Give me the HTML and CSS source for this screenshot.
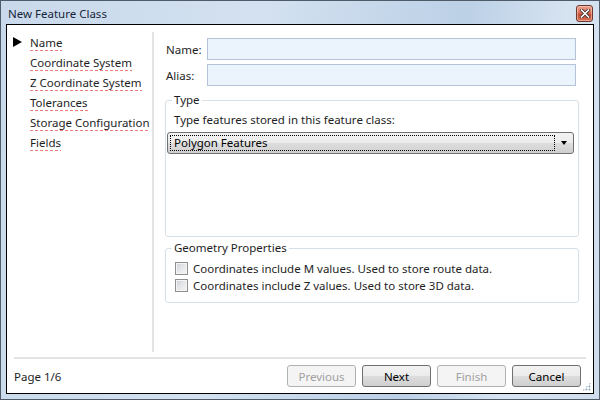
FILE: index.html
```html
<!DOCTYPE html>
<html>
<head>
<meta charset="utf-8">
<link rel="stylesheet" href="styles.css">
</head>
<body>
<div class="window">
  <div class="titlebar">
    <span class="title">New Feature Class</span>
    <span class="close"><svg width="10" height="9" viewBox="0 0 10 9"><path d="M1.5 1 L8.5 8 M8.5 1 L1.5 8" stroke="#3a2a2a" stroke-width="3.2" stroke-linecap="square"/><path d="M1.5 1 L8.5 8 M8.5 1 L1.5 8" stroke="#ffffff" stroke-width="1.6" stroke-linecap="square"/></svg></span>
  </div>
  <div class="client">
    <div class="main">
      <nav class="nav">
        <div class="nav-item active"><span class="arrow"></span><span class="nav-text">Name</span></div>
        <div class="nav-item"><span class="nav-text">Coordinate System</span></div>
        <div class="nav-item"><span class="nav-text">Z Coordinate System</span></div>
        <div class="nav-item"><span class="nav-text">Tolerances</span></div>
        <div class="nav-item"><span class="nav-text">Storage Configuration</span></div>
        <div class="nav-item"><span class="nav-text">Fields</span></div>
      </nav>
      <div class="vsep"></div>
      <div class="content">
        <div class="field-row">
          <label class="field-label">Name:</label>
          <div class="textbox"></div>
        </div>
        <div class="field-row">
          <label class="field-label">Alias:</label>
          <div class="textbox"></div>
        </div>
        <fieldset class="group type-group">
          <legend class="legend">Type</legend>
          <div class="type-text">Type features stored in this feature class:</div>
          <div class="combo">
            <div class="combo-focus">Polygon Features</div>
            <span class="combo-arrow"></span>
          </div>
        </fieldset>
        <fieldset class="group geo-group">
          <legend class="legend">Geometry Properties</legend>
          <div class="check-row"><span class="checkbox"></span><span>Coordinates include M values. Used to store route data.</span></div>
          <div class="check-row"><span class="checkbox"></span><span>Coordinates include Z values. Used to store 3D data.</span></div>
        </fieldset>
      </div>
    </div>
    <div class="hsep"></div>
    <div class="footer">
      <span class="page">Page 1/6</span>
      <div class="buttons">
        <button class="btn disabled">Previous</button>
        <button class="btn">Next</button>
        <button class="btn disabled">Finish</button>
        <button class="btn">Cancel</button>
      </div>
      <span class="grip"></span>
    </div>
  </div>
</div>
</body>
</html>
```
FILE: styles.css
```css
* { box-sizing: border-box; }
html, body { margin: 0; padding: 0; }
body {
  width: 600px;
  height: 400px;
  font-family: "Noto Sans", "Open Sans", sans-serif;
  font-size: 11.5px;
  color: #1e1e1e;
}
.window {
  width: 600px;
  height: 400px;
  border: 1px solid #4f5b69;
  background: linear-gradient(100deg, #c9d9eb 0%, #d3e1f0 40%, #bcd0e6 70%, #d6e3f1 85%, #cfdcec 100%);
  display: flex;
  flex-direction: column;
}
.titlebar {
  height: 23px;
  display: flex;
  align-items: center;
  padding-left: 7px;
  position: relative;
}
.title {
  font-size: 11.5px;
  color: #16263a;
  padding-top: 1px;
}
.close {
  position: absolute;
  right: 6px;
  top: 4px;
  width: 17px;
  height: 17px;
  border: 1px solid #6b3a30;
  border-radius: 3px;
  background: linear-gradient(#eca18d 0%, #db6e55 45%, #c44a32 55%, #d9735a 100%);
  display: flex;
  align-items: center;
  justify-content: center;
  box-shadow: inset 0 0 0 1px rgba(255,220,200,0.5);
}
.client {
  margin: 0 5px 5px 5px;
  height: 370px;
  border: 1px solid #000;
  background: #fff;
  display: flex;
  flex-direction: column;
}
.main {
  display: flex;
  height: 331px;
  padding-top: 7px;
}
.nav {
  width: 145px;
  padding-left: 6px;
}
.nav-item {
  height: 20px;
  display: flex;
  align-items: center;
  padding-left: 17px;
  position: relative;
}
.nav-text {
  padding-top: 2px;
  padding-bottom: 1px;
  background-image: linear-gradient(to right, #f27c7c 60%, transparent 60%);
  background-size: 5px 1px;
  background-repeat: repeat-x;
  background-position: 0 100%;
  white-space: nowrap;
}
.arrow {
  position: absolute;
  left: 0;
  top: 5px;
  width: 0;
  height: 0;
  border-left: 9px solid #000;
  border-top: 5px solid transparent;
  border-bottom: 5px solid transparent;
}
.vsep {
  width: 2px;
  height: 320px;
  background: #e3e3e3;
}
.content {
  flex: 1;
  padding-left: 11px;
  padding-right: 14px;
  padding-top: 6px;
}
.field-row {
  display: flex;
  align-items: center;
  height: 22px;
  margin-bottom: 4px;
  margin-right: 3px;
}
.field-label {
  width: 42px;
  padding-left: 1px;
}
.textbox {
  flex: 1;
  height: 22px;
  border: 1px solid #b5c3d8;
  background: #ebf3fc;
}
.group {
  margin: 0;
  padding: 0;
  border: 1px solid #d7e0e6;
  border-radius: 3px;
  min-width: 0;
}
.legend {
  padding: 0 2px 0 2px;
  margin-left: 5px;
  line-height: 14px;
}
.type-group {
  margin-top: 7px;
  height: 144px;
  padding: 4px 1px 0 1px;
}
.type-text {
  padding-left: 7px;
  height: 18px;
  line-height: 18px;
}
.combo {
  margin-top: 3px;
  height: 22px;
  width: 407px;
  border: 1px solid #707070;
  border-radius: 3px;
  background: linear-gradient(#f3f3f3 0%, #ebebeb 50%, #dddddd 51%, #cfcfcf 100%);
  position: relative;
  padding: 2px;
}
.combo-focus {
  width: 385px;
  height: 16px;
  border: 1px dotted #000;
  line-height: 14px;
  padding-left: 3px;
  color: #000;
}
.combo-arrow {
  position: absolute;
  right: 6px;
  top: 8px;
  width: 0;
  height: 0;
  border-top: 4px solid #000;
  border-left: 3.5px solid transparent;
  border-right: 3.5px solid transparent;
}
.geo-group {
  margin-top: 4px;
  height: 62px;
  padding: 5px 8px 0 1px;
}
.check-row {
  display: flex;
  align-items: center;
  height: 17px;
  gap: 5px;
  padding-left: 8px;
}
.checkbox {
  width: 13px;
  height: 13px;
  border: 1px solid #8e8f8f;
  background: linear-gradient(135deg, #cbcfd5 0%, #e6e7ea 50%, #f6f6f6 100%);
  box-shadow: inset 0 0 0 1px #f4f4f4;
  flex: none;
}
.hsep {
  margin: 1px 7px 0 7px;
  height: 2px;
  background: #e4e4e4;
}
.footer {
  flex: 1;
  display: flex;
  align-items: center;
  padding-left: 7px;
  padding-right: 12px;
  position: relative;
}
.page {
  flex: 1;
}
.buttons {
  display: flex;
  gap: 6px;
}
.btn {
  width: 69px;
  height: 22px;
  font-family: inherit;
  font-size: 11.5px;
  color: #000;
  border: 1px solid #707070;
  border-radius: 3px;
  background: linear-gradient(#f2f2f2 0%, #ebebeb 50%, #dddddd 51%, #cfcfcf 100%);
  padding: 0;
}
.btn.disabled {
  color: #a0a0a0;
  border-color: #adb2b5;
  background: #f4f4f4;
}
.grip {
  position: absolute;
  right: 2px;
  bottom: 2px;
  width: 9px;
  height: 9px;
  background-image: radial-gradient(circle, #8fa7c3 0.9px, transparent 1.1px);
  background-size: 3px 3px;
  clip-path: polygon(100% 0, 100% 100%, 0 100%);
}
```
